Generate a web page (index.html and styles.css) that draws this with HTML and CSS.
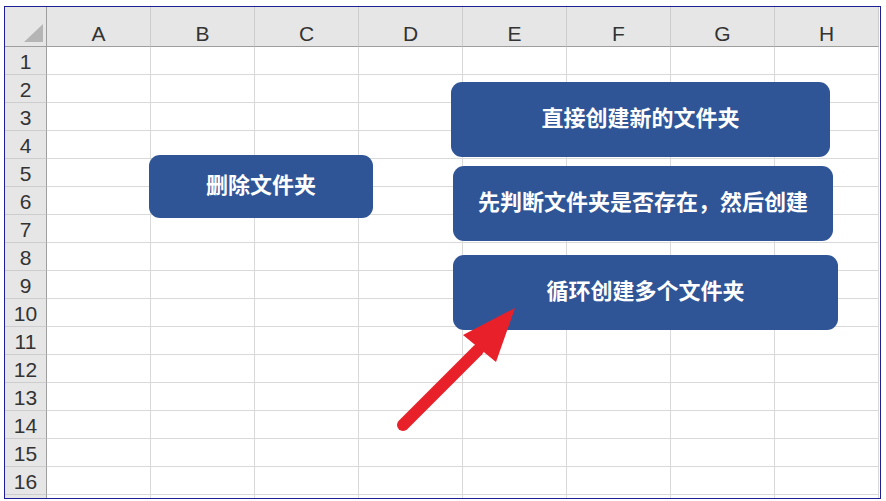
FILE: index.html
```html
<!DOCTYPE HTML>
<html>
<head>
    <title>文件夹操作</title>
    <meta charset="utf-8">
    <link rel="stylesheet" href="styles.css">
</head>

<body>

    <div class="sheet" id="sheet">
        <div class="cell corner"><div class="tri"></div></div>
    </div>

    <!--shapes on the sheet-->
    <div class="shapes">
        <div class="btn btn-del">删除文件夹</div>
        <div class="btn btn-new">直接创建新的文件夹</div>
        <div class="btn btn-check">先判断文件夹是否存在，然后创建</div>
        <div class="btn btn-loop">循环创建多个文件夹</div>

        <svg class="arrow" width="886" height="501" viewBox="0 0 886 501">
            <line x1="403" y1="425" x2="478" y2="350" stroke="#e8202a" stroke-width="12" stroke-linecap="round"/>
            <polygon points="515,308 463,335 496,362" fill="#e8202a"/>
        </svg>
    </div>

    <script>
        var sheet = document.getElementById("sheet");
        var cols = "ABCDEFGH";

        for (var i = 0; i < cols.length; i++) {
            var h = document.createElement("div");
            h.className = "cell col-head";
            h.innerHTML = cols[i];
            sheet.appendChild(h);
        }

        // row 17 only peeks in at the bottom, so it gets no number
        for (var r = 1; r <= 17; r++) {
            var rh = document.createElement("div");
            rh.className = "cell row-head";
            rh.innerHTML = r < 17 ? r : "";
            sheet.appendChild(rh);
            for (var c = 0; c < cols.length; c++) {
                var d = document.createElement("div");
                d.className = "cell";
                sheet.appendChild(d);
            }
        }
    </script>
</body>

</html>
```

FILE: styles.css
```css
html {
    font-family: "Liberation Sans", Arial, sans-serif;
}

body {
    margin: 0;
    background: #fff;
    position: relative;
    width: 886px;
    height: 501px;
    overflow: hidden;
}

.sheet {
    display: grid;
    grid-template-columns: 42px repeat(8, 104px);
    grid-template-rows: 40px;
    grid-auto-rows: 28px;
    width: 875px;
    height: 491px;
    margin: 6px 0 0 4px;
    border: 1px solid #1e1e96;
    overflow: hidden;
    background: #fff;
}

.cell {
    box-sizing: border-box;
    border-right: 1px solid #d9d9d9;
    border-bottom: 1px solid #d9d9d9;
    background: #fff;
}

.col-head,
.row-head,
.corner {
    background: #e6e6e6;
    display: flex;
    align-items: center;
    justify-content: center;
    font-size: 21px;
    color: #333;
}

.col-head {
    border-right-color: #cdcdcd;
    border-bottom-color: #9e9e9e;
    padding-top: 14px;
}

.row-head {
    border-right-color: #9e9e9e;
    border-bottom-color: #cdcdcd;
    padding-top: 2px;
}

.corner {
    border-right-color: #9e9e9e;
    border-bottom-color: #9e9e9e;
    align-items: flex-end;
    justify-content: flex-end;
    padding: 0 3px 4px 0;
}

.tri {
    width: 19px;
    height: 18px;
    background: #b5b5b5;
    clip-path: polygon(100% 0, 100% 100%, 0 100%);
}

.shapes {
    position: absolute;
    top: 0;
    left: 0;
    width: 886px;
    height: 501px;
    pointer-events: none;
}

.btn {
    position: absolute;
    box-sizing: border-box;
    display: flex;
    align-items: center;
    justify-content: center;
    padding-bottom: 7px;
    background: #2f5597;
    color: #fff;
    border-radius: 11px;
    font-family: "Noto Sans CJK SC", sans-serif;
    font-weight: bold;
    font-size: 22px;
    line-height: 1;
}

.btn-del {
    left: 149px;
    top: 155px;
    width: 224px;
    height: 63px;
}

.btn-new {
    left: 451px;
    top: 82px;
    width: 379px;
    height: 75px;
}

.btn-check {
    left: 453px;
    top: 166px;
    width: 380px;
    height: 75px;
}

.btn-loop {
    left: 453px;
    top: 255px;
    width: 385px;
    height: 75px;
}

.arrow {
    position: absolute;
    top: 0;
    left: 0;
}
```
